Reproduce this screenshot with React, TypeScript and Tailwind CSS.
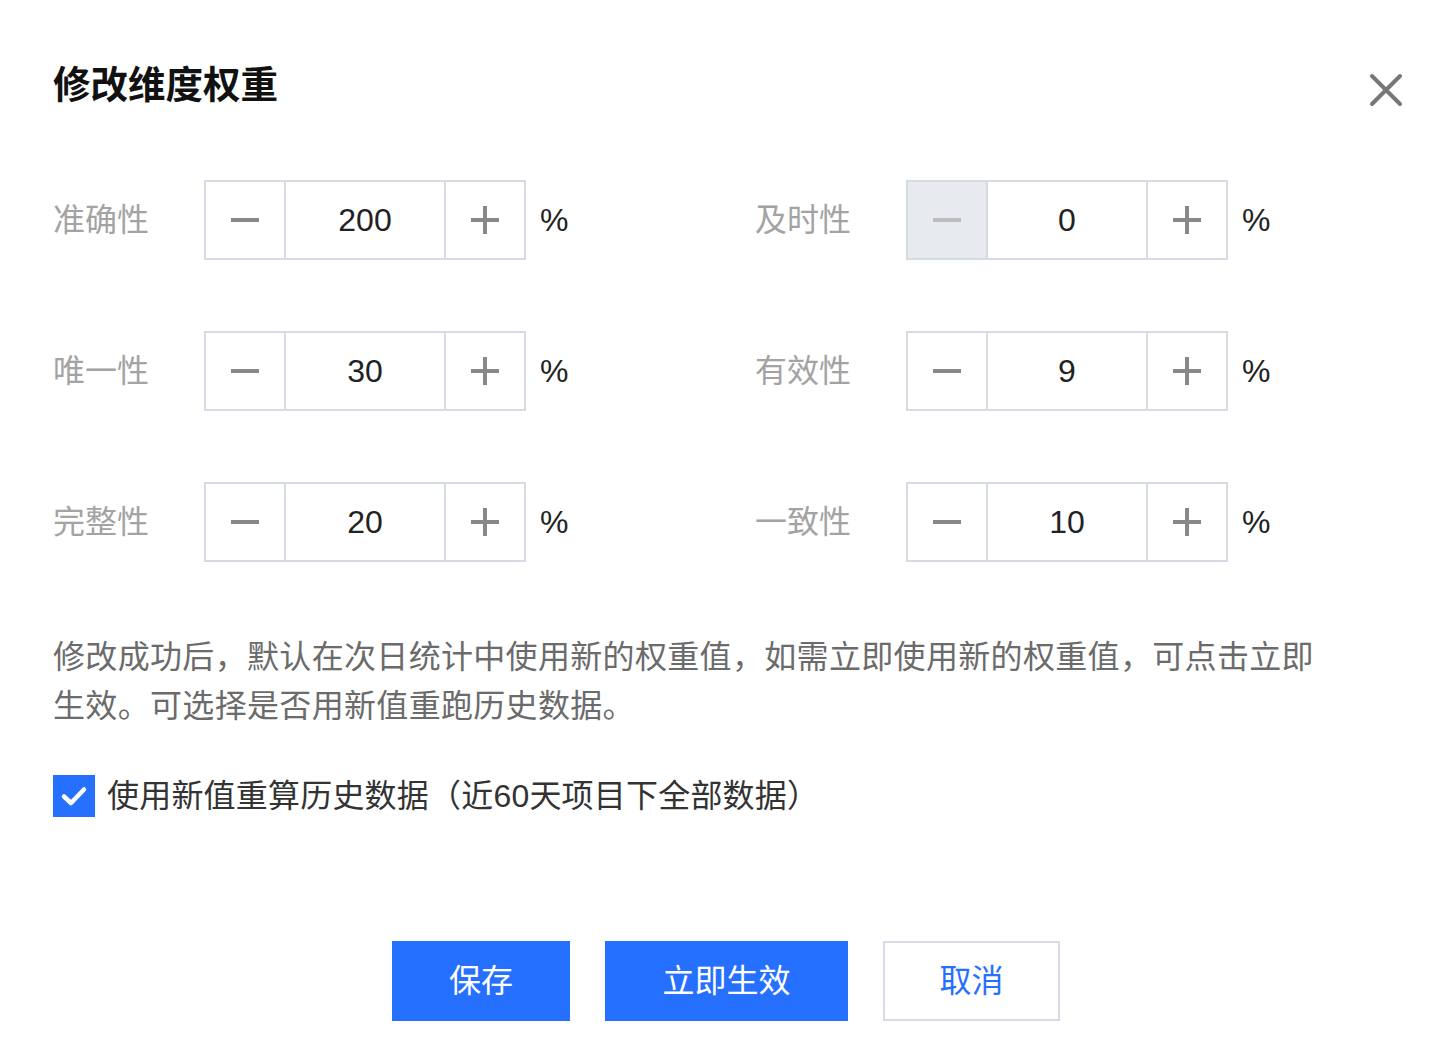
import React, { useState } from 'react';

const CJK = "font-['Liberation_Sans','Noto_Sans_CJK_SC',sans-serif]";

type Dim = { label: string; value: number };

function Stepper({ value, onChange }: { value: number; onChange: (v: number) => void }) {
  const disabled = value <= 0;
  return (
    <div className="flex h-[80px] shrink-0 border-2 border-[#d6dbe3]">
      <button
        type="button"
        onClick={() => !disabled && onChange(value - 1)}
        className={`flex w-[80px] items-center justify-center border-r-2 border-[#d6dbe3] ${disabled ? 'bg-[#e7eaef]' : 'bg-white'}`}
      >
        <span className={`block h-[4px] w-[28px] ${disabled ? 'bg-[#bdbdbd]' : 'bg-[#888888]'}`} />
      </button>
      <div className="flex w-[158px] items-center justify-center text-[32px] text-[#222222]">{value}</div>
      <button
        type="button"
        onClick={() => onChange(value + 1)}
        className="relative flex w-[80px] items-center justify-center border-l-2 border-[#d6dbe3] bg-white"
      >
        <span className="block h-[4px] w-[28px] bg-[#888888]" />
        <span className="absolute h-[28px] w-[4px] bg-[#888888]" />
      </button>
    </div>
  );
}

export default function App() {
  const [dims, setDims] = useState<Dim[]>([
    { label: '准确性', value: 200 },
    { label: '及时性', value: 0 },
    { label: '唯一性', value: 30 },
    { label: '有效性', value: 9 },
    { label: '完整性', value: 20 },
    { label: '一致性', value: 10 },
  ]);
  const [recalc, setRecalc] = useState(true);

  const setValue = (i: number, v: number) => setDims((d) => d.map((x, j) => (j === i ? { ...x, value: v } : x)));

  return (
    <div className={`min-h-[1047px] bg-white px-[53px] ${CJK}`}>
      <div className="flex items-start justify-between pt-[63px]">
        <h1 className="text-[37.5px] font-bold leading-[44px] text-[#111111]">修改维度权重</h1>
        <button type="button" className="-mr-[1px] mt-[9px] text-[#777777]">
          <svg width="36" height="36" viewBox="0 0 36 36" fill="none" stroke="currentColor" strokeWidth="4" strokeLinecap="round">
            <path d="M4 4 L32 32 M32 4 L4 32" />
          </svg>
        </button>
      </div>

      <div className="mt-[72px] grid grid-cols-[702px_1fr] gap-y-[71px]">
        {dims.map((d, i) => (
          <div key={d.label} className="flex items-center">
            <div className="w-[151px] shrink-0 text-[32px] text-[#a3a3a3]">{d.label}</div>
            <Stepper value={d.value} onChange={(v) => setValue(i, v)} />
            <span className="ml-[14px] text-[32px] text-[#222222]">%</span>
          </div>
        ))}
      </div>

      <p className="mt-[71px] max-w-[1280px] text-[32px] leading-[49px] tracking-[0.33px] text-[#6b6b6b]">
        修改成功后，默认在次日统计中使用新的权重值，如需立即使用新的权重值，可点击立即生效。可选择是否用新值重跑历史数据。
      </p>

      <label className="mt-[41px] flex cursor-pointer items-center">
        <span
          onClick={() => setRecalc(!recalc)}
          className={`flex h-[42px] w-[42px] items-center justify-center ${recalc ? 'bg-[#2670ff]' : 'border-2 border-[#d6dbe3] bg-white'}`}
        >
          {recalc && (
            <svg width="30" height="30" viewBox="0 0 30 30" fill="none" stroke="white" strokeWidth="4.5" strokeLinecap="round" strokeLinejoin="round">
              <path d="M5 15.5 L12 22 L25 8.5" />
            </svg>
          )}
        </span>
        <span className="ml-[12px] text-[32px] tracking-[0.2px] text-[#333333]">使用新值重算历史数据（近60天项目下全部数据）</span>
      </label>

      <div className="mt-[121px] flex justify-center gap-[35px] pr-[4px]">
        <button type="button" className="h-[80px] w-[178px] bg-[#2670ff] text-[32px] text-white">保存</button>
        <button type="button" className="h-[80px] w-[243px] bg-[#2670ff] text-[32px] text-white">立即生效</button>
        <button type="button" className="h-[80px] w-[177px] border-2 border-[#d6dbe3] bg-white text-[32px] text-[#2670ff]">取消</button>
      </div>
    </div>
  );
}
